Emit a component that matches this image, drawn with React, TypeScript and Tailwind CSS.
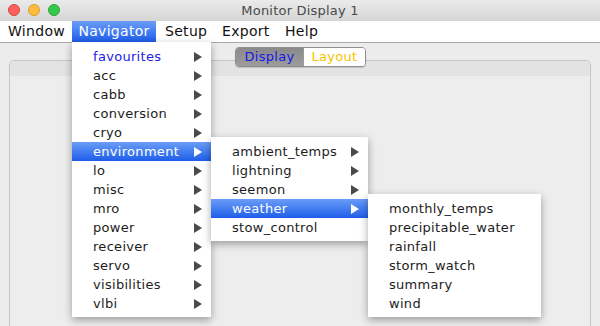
import React from "react";

type Item = { label: string; sub?: boolean; active?: boolean; blue?: boolean };

const navItems: Item[] = [
  { label: "favourites", sub: true, blue: true },
  { label: "acc", sub: true },
  { label: "cabb", sub: true },
  { label: "conversion", sub: true },
  { label: "cryo", sub: true },
  { label: "environment", sub: true, active: true },
  { label: "lo", sub: true },
  { label: "misc", sub: true },
  { label: "mro", sub: true },
  { label: "power", sub: true },
  { label: "receiver", sub: true },
  { label: "servo", sub: true },
  { label: "visibilities", sub: true },
  { label: "vlbi", sub: true },
];

const envItems: Item[] = [
  { label: "ambient_temps", sub: true },
  { label: "lightning", sub: true },
  { label: "seemon", sub: true },
  { label: "weather", sub: true, active: true },
  { label: "stow_control" },
];

const weatherItems: Item[] = [
  { label: "monthly_temps" },
  { label: "precipitable_water" },
  { label: "rainfall" },
  { label: "storm_watch" },
  { label: "summary" },
  { label: "wind" },
];

function Arrow({ white }: { white?: boolean }) {
  return (
    <svg width="8" height="10" viewBox="0 0 8 10" className="shrink-0">
      <path d="M0 0 L8 5 L0 10 Z" fill={white ? "#ffffff" : "#4a4a4a"} />
    </svg>
  );
}

function Menu({ items, className }: { items: Item[]; className: string }) {
  return (
    <div
      className={`absolute bg-white pt-[5px] pb-[4px] tracking-[0.3px] shadow-[0_3px_8px_rgba(0,0,0,0.35)] ${className}`}
    >
      {items.map((it) => (
        <div
          key={it.label}
          className={`flex h-[19px] items-center justify-between pl-[21px] pr-[9px] ${
            it.active
              ? "bg-gradient-to-b from-[#6a9cf7] to-[#1d5ce9] text-white"
              : it.blue
              ? "text-[#2222e6]"
              : "text-[#1c1c1c]"
          }`}
        >
          <span>{it.label}</span>
          {it.sub && <Arrow white={it.active} />}
        </div>
      ))}
    </div>
  );
}

export default function App() {
  return (
    <div
      className="relative h-[326px] w-[600px] overflow-hidden bg-[#ececec] text-[13px]"
      style={{ fontFamily: '"DejaVu Sans", "Liberation Sans", sans-serif' }}
    >
      {/* title bar */}
      <div className="relative flex h-[21px] items-center justify-center bg-gradient-to-b from-[#ebebeb] to-[#d5d5d5]">
        <div className="absolute left-[8px] top-[4px] flex gap-[8px]">
          <div className="h-[12px] w-[12px] rounded-full border border-[#d9453c] bg-[#fc605c]" />
          <div className="h-[12px] w-[12px] rounded-full border border-[#dd9e27] bg-[#fdbc40]" />
          <div className="h-[12px] w-[12px] rounded-full border border-[#2aa33a] bg-[#34c84a]" />
        </div>
        <span className="tracking-[0.2px] text-[#4a4a4a]">Monitor Display 1</span>
      </div>

      {/* menu bar */}
      <div className="flex h-[22px] items-center border-b border-[#a8a8a8] bg-white text-[14px] tracking-[0.3px] text-[#111]">
        <div className="flex h-full w-[72px] items-center pl-[8px]">Window</div>
        <div className="flex h-full w-[84px] items-center justify-center bg-gradient-to-b from-[#6a9cf7] to-[#1d5ce9] text-white">
          Navigator
        </div>
        <div className="flex h-full w-[57px] items-center pl-[9px]">Setup</div>
        <div className="flex h-full w-[63px] items-center pl-[9px]">Export</div>
        <div className="flex h-full items-center pl-[9px]">Help</div>
      </div>

      {/* content */}
      <div className="relative px-[9px] pt-[17px]">
        <div className="h-[300px] rounded-t-[5px] border border-[#c6c6c6] bg-[#ededed]">
          <div className="h-[15px] rounded-t-[5px] bg-[#e3e3e3]" />
        </div>
        <div className="absolute left-[235px] top-[4px] flex h-[20px] overflow-hidden rounded-[4px] border border-[#8d8d8d] text-[13px] tracking-[0.3px] shadow-[0_1px_1px_rgba(0,0,0,0.15)]">
          <div className="flex w-[67px] items-center justify-center bg-gradient-to-b from-[#8a8a8a] to-[#9c9c9c] text-[#1818e8]">
            Display
          </div>
          <div className="flex w-[62px] items-center justify-center border-l border-[#9a9a9a] bg-white text-[#f5c400]">
            Layout
          </div>
        </div>
      </div>

      {/* open menus */}
      <Menu items={navItems} className="left-[72px] top-[42px] w-[139px]" />
      <Menu items={envItems} className="left-[211px] top-[137px] w-[157px]" />
      <Menu items={weatherItems} className="left-[368px] top-[194px] w-[173px]" />
    </div>
  );
}
